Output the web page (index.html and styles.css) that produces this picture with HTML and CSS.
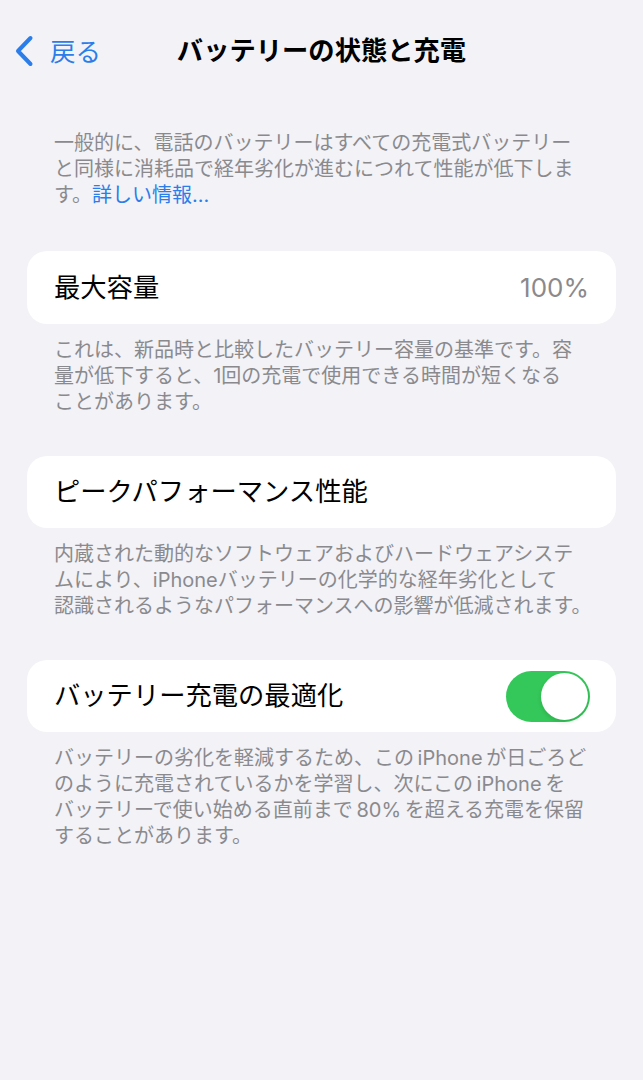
FILE: index.html
```html
<!DOCTYPE html>
<html lang="ja">
<head>
<meta charset="utf-8">
<title>バッテリーの状態と充電</title>
<link rel="stylesheet" href="styles.css">
</head>
<body>
<header class="nav">
  <a class="back" href="#">
    <svg class="chev" width="22" height="32" viewBox="0 0 22 32"><path d="M17.5 3 L5 16 L17.5 29" fill="none" stroke="#2b7de9" stroke-width="4" stroke-linecap="round" stroke-linejoin="round"/></svg>
    <span class="back-label">戻る</span>
  </a>
  <h1 class="title">バッテリーの状態と充電</h1>
  <div class="spacer"></div>
</header>

<main class="content">
  <p class="intro">一般的に、電話のバッテリーはすべての充電式バッテリー<br>と同様に消耗品で経年劣化が進むにつれて性能が低下しま<br>す。<a class="link" href="#">詳しい情報...</a></p>

  <section class="group first">
    <div class="card">
      <span class="label">最大容量</span>
      <span class="value">100%</span>
    </div>
    <p class="footer">これは、新品時と比較したバッテリー容量の基準です。容<br>量が低下すると、1回の充電で使用できる時間が短くなる<br>ことがあります。</p>
  </section>

  <section class="group">
    <div class="card">
      <span class="label">ピークパフォーマンス性能</span>
    </div>
    <p class="footer">内蔵された動的なソフトウェアおよびハードウェアシステ<br>ムにより、iPhoneバッテリーの化学的な経年劣化として<br>認識されるようなパフォーマンスへの影響が低減されます。</p>
  </section>

  <section class="group">
    <div class="card">
      <span class="label">バッテリー充電の最適化</span>
      <span class="toggle on"><span class="knob"></span></span>
    </div>
    <p class="footer">バッテリーの劣化を軽減するため、この iPhone が日ごろど<br>のように充電されているかを学習し、次にこの iPhone を<br>バッテリーで使い始める直前まで 80% を超える充電を保留<br>することがあります。</p>
  </section>
</main>
</body>
</html>
```

FILE: styles.css
```css
html, body {
  margin: 0;
  padding: 0;
  background: #f2f2f7;
}
body {
  font-family: "Inter", "Noto Sans CJK JP", sans-serif;
  color: #000;
  width: 643px;
  min-height: 1080px;
}
.nav {
  height: 102px;
  display: grid;
  grid-template-columns: 1fr auto 1fr;
  align-items: center;
}
.back {
  display: flex;
  align-items: center;
  gap: 15px;
  padding-left: 13px;
  text-decoration: none;
  color: #2b7de9;
}
.chev {
  display: block;
}
.back-label {
  font-size: 25.5px;
  line-height: 30px;
  padding-top: 2px;
}
.title {
  margin: 0;
  font-size: 26.3px;
  font-weight: 700;
  line-height: 30px;
  color: #000;
}
.content {
  padding: 0 27px;
}
.intro {
  margin: 28px 0 0;
  padding: 0 27px;
  font-size: 20px;
  line-height: 26px;
  color: #8a8a8e;
  white-space: nowrap;
}
.link {
  color: #2b7de9;
  text-decoration: none;
}
.group {
  margin-top: 41px;
}
.group.first {
  margin-top: 43px;
}
.card {
  background: #fff;
  border-radius: 20px;
  height: 72px;
  padding: 0 26px 0 27px;
  display: flex;
  align-items: center;
  justify-content: space-between;
  box-sizing: border-box;
}
.group.first .card {
  height: 73px;
}
.label {
  font-size: 26.3px;
  line-height: 30px;
}
.value {
  font-size: 26px;
  line-height: 30px;
  color: #8a8a8e;
  padding-right: 1px;
}
.footer {
  margin: 0;
  padding: 13px 27px 0;
  font-size: 20px;
  line-height: 26px;
  color: #8a8a8e;
  white-space: nowrap;
}
.footer, .intro {
  word-spacing: -2px;
}
.toggle {
  width: 84px;
  height: 51px;
  border-radius: 26px;
  background: #e9e9eb;
  display: flex;
  align-items: center;
  box-sizing: border-box;
  padding: 2px;
}
.toggle.on {
  background: #34c759;
  justify-content: flex-end;
}
.knob {
  width: 47px;
  height: 47px;
  border-radius: 50%;
  background: #fff;
  box-shadow: 0 2px 4px rgba(0,0,0,0.12);
}
```
